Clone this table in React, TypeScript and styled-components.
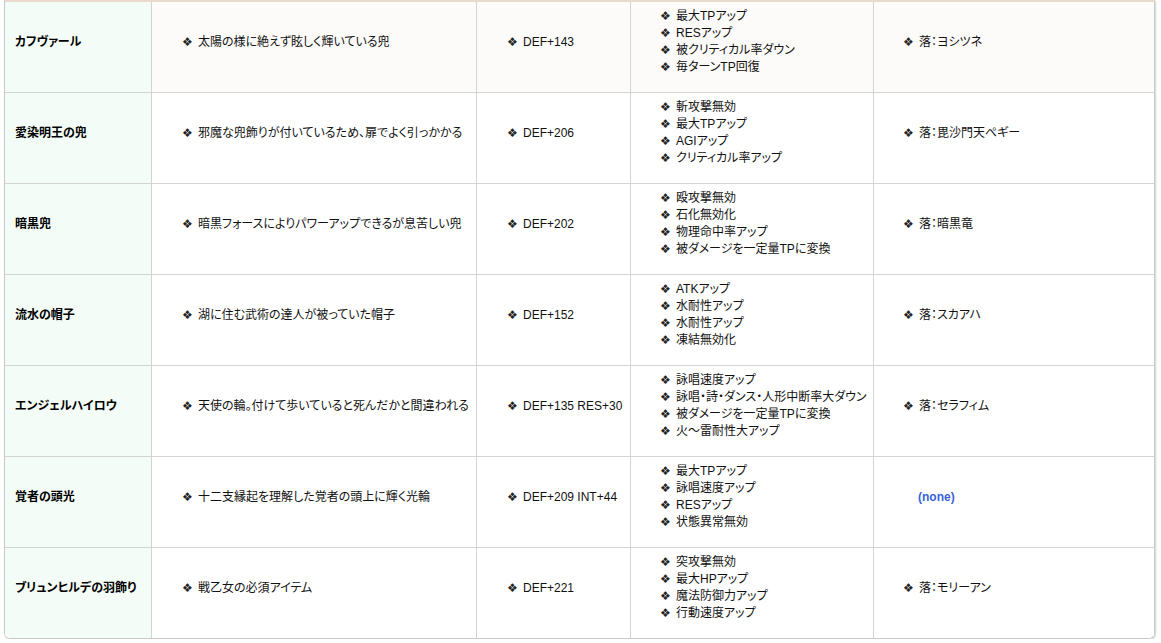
import React from 'react';
import styled, { createGlobalStyle } from 'styled-components';

const GlobalStyle = createGlobalStyle`
  html, body {
    margin: 0;
    padding: 0;
    background: #ffffff;
  }
  body {
    font-family: 'Liberation Sans', 'Noto Sans CJK JP', sans-serif;
    font-size: 12px;
    color: #111111;
    font-feature-settings: 'palt';
  }
`;

const Wrapper = styled.div`
  padding: 0 0 0 4px;
`;

const Frame = styled.div`
  width: 1151px;
  box-sizing: border-box;
  border: 1px solid #c9c9c9;
  border-top: 2px solid #eadacb;
  border-radius: 0 0 6px 6px;
  overflow: hidden;
  box-shadow: 1px 1px 2px rgba(0, 0, 0, 0.18);
`;

const Table = styled.table`
  width: 100%;
  table-layout: fixed;
  border-collapse: separate;
  border-spacing: 0;
`;

const Row = styled.tr<{ $highlight?: boolean }>`
  background: ${(p) => (p.$highlight ? '#fcfbf9' : '#ffffff')};

  &:last-child td {
    border-bottom: none;
  }
`;

const Cell = styled.td<{ $pad: number }>`
  height: 80px;
  box-sizing: content-box;
  padding: 0 4px 10px ${(p) => p.$pad}px;
  border-right: 1px solid #d3d3d3;
  border-bottom: 1px solid #d3d3d3;
  vertical-align: middle;
  white-space: nowrap;
  line-height: 17px;

  &:last-child {
    border-right: none;
  }
`;

const NameCell = styled(Cell)`
  background: #f3fcf6;
  font-weight: bold;
  color: #000000;
`;

const Bullet = styled.span`
  display: inline-block;
  width: 16px;
  height: 17px;
  line-height: 17px;
  vertical-align: top;
  font-family: 'DejaVu Sans', sans-serif;
  font-size: 12px;
  color: #222222;
`;

const EffectList = styled.ul`
  margin: 0;
  padding: 0;
  list-style: none;
`;

const EffectItem = styled.li`
  height: 17px;
  line-height: 17px;
`;

const None = styled.span`
  display: inline-block;
  padding-left: 15px;
  font-weight: bold;
  font-size: 12px;
  color: #3a62dc;
`;

interface Item {
  name: string;
  desc: string;
  stat: string;
  effects: string[];
  drop: string | null;
}

const items: Item[] = [
  {
    name: 'カフヴァール',
    desc: '太陽の様に絶えず眩しく輝いている兜',
    stat: 'DEF+143',
    effects: ['最大TPアップ', 'RESアップ', '被クリティカル率ダウン', '毎ターンTP回復'],
    drop: '落：ヨシツネ',
  },
  {
    name: '愛染明王の兜',
    desc: '邪魔な兜飾りが付いているため、扉でよく引っかかる',
    stat: 'DEF+206',
    effects: ['斬攻撃無効', '最大TPアップ', 'AGIアップ', 'クリティカル率アップ'],
    drop: '落：毘沙門天ペギー',
  },
  {
    name: '暗黒兜',
    desc: '暗黒フォースによりパワーアップできるが息苦しい兜',
    stat: 'DEF+202',
    effects: ['殴攻撃無効', '石化無効化', '物理命中率アップ', '被ダメージを一定量TPに変換'],
    drop: '落：暗黒竜',
  },
  {
    name: '流水の帽子',
    desc: '湖に住む武術の達人が被っていた帽子',
    stat: 'DEF+152',
    effects: ['ATKアップ', '水耐性アップ', '水耐性アップ', '凍結無効化'],
    drop: '落：スカアハ',
  },
  {
    name: 'エンジェルハイロウ',
    desc: '天使の輪。付けて歩いていると死んだかと間違われる',
    stat: 'DEF+135 RES+30',
    effects: ['詠唱速度アップ', '詠唱・詩・ダンス・人形中断率大ダウン', '被ダメージを一定量TPに変換', '火～雷耐性大アップ'],
    drop: '落：セラフィム',
  },
  {
    name: '覚者の頭光',
    desc: '十二支縁起を理解した覚者の頭上に輝く光輪',
    stat: 'DEF+209 INT+44',
    effects: ['最大TPアップ', '詠唱速度アップ', 'RESアップ', '状態異常無効'],
    drop: null,
  },
  {
    name: 'ブリュンヒルデの羽飾り',
    desc: '戦乙女の必須アイテム',
    stat: 'DEF+221',
    effects: ['突攻撃無効', '最大HPアップ', '魔法防御力アップ', '行動速度アップ'],
    drop: '落：モリーアン',
  },
];

function Line({ children }: { children: React.ReactNode }) {
  return (
    <>
      <Bullet>❖</Bullet>
      {children}
    </>
  );
}

export default function App() {
  return (
    <Wrapper>
      <GlobalStyle />
      <Frame>
        <Table>
          <colgroup>
            <col style={{ width: 147 }} />
            <col style={{ width: 325 }} />
            <col style={{ width: 154 }} />
            <col style={{ width: 243 }} />
            <col />
          </colgroup>
          <tbody>
            {items.map((item, i) => (
              <Row key={item.name} $highlight={i === 0}>
                <NameCell $pad={10}>{item.name}</NameCell>
                <Cell $pad={30}>
                  <Line>{item.desc}</Line>
                </Cell>
                <Cell $pad={30}>
                  <Line>{item.stat}</Line>
                </Cell>
                <Cell $pad={29}>
                  <EffectList>
                    {item.effects.map((effect, j) => (
                      <EffectItem key={j}>
                        <Line>{effect}</Line>
                      </EffectItem>
                    ))}
                  </EffectList>
                </Cell>
                <Cell $pad={29}>{item.drop ? <Line>{item.drop}</Line> : <None>(none)</None>}</Cell>
              </Row>
            ))}
          </tbody>
        </Table>
      </Frame>
    </Wrapper>
  );
}
